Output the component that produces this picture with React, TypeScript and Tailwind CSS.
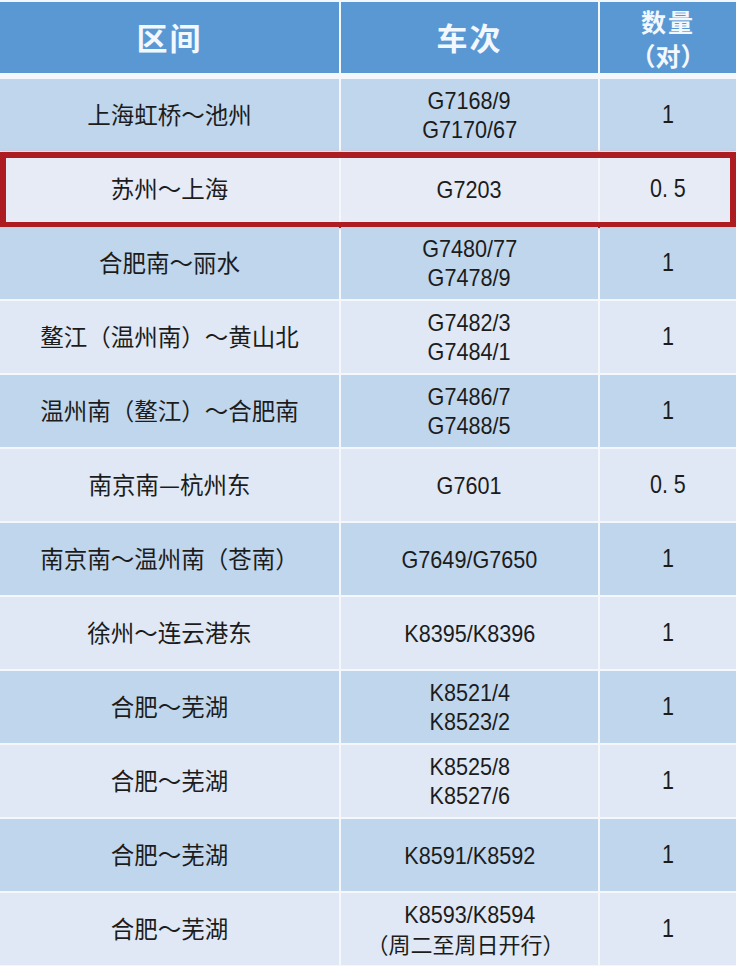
const rows = [
  { route: '上海虹桥～池州', trains: ['G7168/9', 'G7170/67'], qty: '1' },
  { route: '苏州～上海', trains: ['G7203'], qty: '0. 5', highlight: true },
  { route: '合肥南～丽水', trains: ['G7480/77', 'G7478/9'], qty: '1' },
  { route: '鳌江（温州南）～黄山北', trains: ['G7482/3', 'G7484/1'], qty: '1' },
  { route: '温州南（鳌江）～合肥南', trains: ['G7486/7', 'G7488/5'], qty: '1' },
  { route: '南京南—杭州东', trains: ['G7601'], qty: '0. 5' },
  { route: '南京南～温州南（苍南）', trains: ['G7649/G7650'], qty: '1' },
  { route: '徐州～连云港东', trains: ['K8395/K8396'], qty: '1' },
  { route: '合肥～芜湖', trains: ['K8521/4', 'K8523/2'], qty: '1' },
  { route: '合肥～芜湖', trains: ['K8525/8', 'K8527/6'], qty: '1' },
  { route: '合肥～芜湖', trains: ['K8591/K8592'], qty: '1' },
  { route: '合肥～芜湖', trains: ['K8593/K8594', '（周二至周日开行）'], qty: '1' },
];

const cjk = "font-['Noto_Sans_CJK_SC','Noto_Sans',sans-serif]";
const num = "font-['Liberation_Sans','Noto_Sans_CJK_SC',sans-serif]";

export default function App() {
  return (
    <div className="w-[736px] h-[966px] bg-[#f4f8fc] pt-[2px] overflow-hidden">
      {/* Header */}
      <div className="grid grid-cols-[339px_257px_136px] gap-x-[2px] h-[71px] text-[#f3f8ff] font-bold">
        <div className={`bg-[#5a98d4] flex items-center justify-center text-[31px] tracking-[2px] ${cjk}`}>区间</div>
        <div className={`bg-[#5a98d4] flex items-center justify-center text-[31px] tracking-[2px] ${cjk}`}>车次</div>
        <div className={`bg-[#5a98d4] flex flex-col items-center justify-center text-[25px] leading-[34px] ${cjk}`}>
          <span className="tracking-[2px]">数量</span>
          <span>（对）</span>
        </div>
      </div>

      {/* Rows */}
      <div className="flex flex-col gap-y-[2px] mt-[6px]">
        {rows.map((row, i) => {
          const bg = row.highlight ? 'bg-[#e6ebf6]' : i % 2 === 0 ? 'bg-[#c0d6ed]' : 'bg-[#dfe8f4]';
          return (
            <div key={i} className="relative grid grid-cols-[339px_257px_136px] gap-x-[2px] h-[72px] text-[#1c1c1c]">
              <div className={`${bg} flex items-center justify-center text-[23.5px] ${cjk}`}>{row.route}</div>
              <div className={`${bg} flex flex-col items-center justify-center leading-[29px]`}>
                {row.trains.map((t, j) =>
                  t.startsWith('（') ? (
                    <span key={j} className={`text-[22px] leading-[29px] -ml-[8px] ${cjk}`}>{t}</span>
                  ) : (
                    <span key={j} className={`inline-block text-[24px] scale-x-[0.9] ${num}`}>{t}</span>
                  )
                )}
              </div>
              <div className={`${bg} flex items-center justify-center`}>
                <span className={`inline-block text-[25px] scale-x-[0.86] ${num}`}>{row.qty}</span>
              </div>
              {row.highlight && (
                <div className="absolute -top-[1px] -bottom-[3px] left-0 right-0 border-[6px] border-[#ac1c20] shadow-[0_0_3px_#f4a0a0]" />
              )}
            </div>
          );
        })}
      </div>
    </div>
  );
}
